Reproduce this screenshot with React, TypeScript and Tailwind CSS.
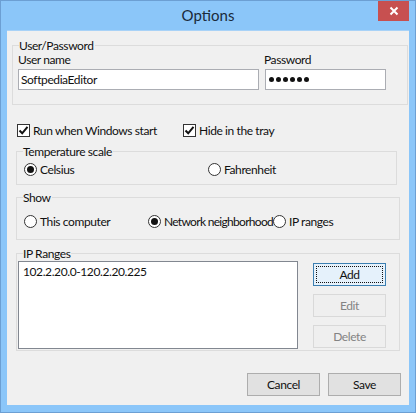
import React from 'react';

const font = { fontFamily: 'Lato, "Liberation Sans", sans-serif' };

const CheckBox: React.FC<{ label: string; className?: string }> = ({ label, className }) => (
  <label className={`flex items-center gap-[3px] whitespace-nowrap ${className ?? ''}`}>
    <span className="w-[13px] h-[13px] shrink-0 border border-[#333] bg-white flex items-center justify-center">
      <svg width="11" height="11" viewBox="0 0 11 11">
        <path d="M1.5 5.5 L4.2 8.3 L9.5 1.8" fill="none" stroke="#111" strokeWidth="2" />
      </svg>
    </span>
    <span>{label}</span>
  </label>
);

const Radio: React.FC<{ label: string; checked?: boolean; className?: string; textClass?: string }> = ({ label, checked, className, textClass }) => (
  <label className={`flex items-center gap-[3px] whitespace-nowrap ${className ?? ''}`}>
    <span className="relative z-10 w-[13px] h-[13px] shrink-0 rounded-full border border-[#333] bg-white flex items-center justify-center">
      {checked && <span className="w-[7px] h-[7px] rounded-full bg-[#111]" />}
    </span>
    <span className={textClass}>{label}</span>
  </label>
);

const Group: React.FC<{ title: string; className?: string; children: React.ReactNode }> = ({ title, className, children }) => (
  <div className={`relative border border-[#dcdcdc] ${className ?? ''}`}>
    <span className="absolute -top-[8px] left-[6px] bg-[#f0f0f0] pr-[1px] leading-[15px]">{title}</span>
    {children}
  </div>
);

const Btn: React.FC<{ label: string; variant?: 'default' | 'disabled' | 'normal'; className?: string }> = ({ label, variant = 'normal', className }) => {
  const base = 'w-[73px] h-[23px] flex items-center justify-center';
  if (variant === 'default')
    return (
      <div className={`${base} border border-[#3c7fb1] bg-[#e5f1fb] p-[2px] ${className ?? ''}`}>
        <div className="w-full h-full border border-dotted border-[#111] flex items-center justify-center text-[#111]">{label}</div>
      </div>
    );
  if (variant === 'disabled')
    return <div className={`${base} border border-[#d9d9d9] bg-[#efefef] text-[#838383] ${className ?? ''}`}>{label}</div>;
  return <div className={`${base} border border-[#adadad] bg-[#e1e1e1] text-[#111] ${className ?? ''}`}>{label}</div>;
};

export default function App() {
  return (
    <div style={font} className="w-[416px] h-[413px] bg-[#8bc6f9] border border-[#6c9fd3] flex flex-col text-[12px] leading-[15px] tracking-[-0.4px] text-[#111]">
      {/* title bar */}
      <div className="relative h-[29px] flex items-center justify-center">
        <span className="text-[15px] text-[#1a2a3a] leading-none tracking-normal -mt-[1px]">Options</span>
        <div className="absolute right-[6px] top-0 w-[31px] h-[20px] bg-[#c75050] flex items-center justify-center">
          <svg width="10" height="10" viewBox="0 0 10 10">
            <path d="M1.5 1.5 L8.5 8.5 M8.5 1.5 L1.5 8.5" stroke="white" strokeWidth="2" />
          </svg>
        </div>
      </div>

      {/* client */}
      <div className="ml-[6px] mr-[6px] h-[375px] bg-[#f0f0f0] border-t border-[#a8d2f7] flex flex-col">
        <Group title="User/Password" className="mt-[14px] ml-[5px] mr-[1px] h-[60px]">
          <div className="flex pt-[6px] pl-[5px]">
            <div className="flex flex-col">
              <span className="leading-[16px]">User name</span>
              <div className="mt-[1px] w-[241px] h-[21px] border border-[#abadb3] bg-white flex items-center pl-[2px]">SoftpediaEditor</div>
            </div>
            <div className="flex flex-col ml-[6px]">
              <span className="leading-[16px] ml-[-1px]">Password</span>
              <div className="mt-[1px] w-[121px] h-[21px] border border-[#abadb3] bg-white flex items-center pl-[3px] gap-[2px]">
                {[0, 1, 2, 3, 4, 5].map((i) => (
                  <span key={i} className="w-[5px] h-[5px] rounded-full bg-[#111]" />
                ))}
              </div>
            </div>
          </div>
        </Group>

        <div className="flex mt-[19px] ml-[10px] h-[13px]">
          <CheckBox label="Run when Windows start" className="w-[166px]" />
          <CheckBox label="Hide in the tray" />
        </div>

        <Group title="Temperature scale" className="mt-[14px] ml-[9px] w-[381px] h-[34px]">
          <div className="flex pt-[10px] pl-[7px]">
            <Radio label="Celsius" checked className="w-[184px]" />
            <Radio label="Fahrenheit" />
          </div>
        </Group>

        <Group title="Show" className="mt-[12px] ml-[9px] w-[384px] h-[43px]">
          <div className="flex pt-[16px] pl-[7px]">
            <Radio label="This computer" className="w-[124px]" />
            <Radio label="Network neighborhood" checked className="w-[125px]" textClass="tracking-[-0.7px]" />
            <Radio label="IP ranges" />
          </div>
        </Group>

        <Group title="IP Ranges" className="mt-[13px] ml-[9px] w-[384px] h-[98px]">
          <div className="flex pt-[7px] pl-[1px]">
            <div className="w-[280px] h-[88px] border border-[#828790] bg-white pl-[4px] pt-[2px]">102.2.20.0-120.2.20.225</div>
            <div className="flex flex-col gap-[8px] ml-[15px] pt-[2px]">
              <Btn label="Add" variant="default" />
              <Btn label="Edit" variant="disabled" />
              <Btn label="Delete" variant="disabled" />
            </div>
          </div>
        </Group>

        <div className="flex justify-end gap-[8px] mt-[22px] mr-[8px]">
          <Btn label="Cancel" />
          <Btn label="Save" />
        </div>
      </div>
    </div>
  );
}
